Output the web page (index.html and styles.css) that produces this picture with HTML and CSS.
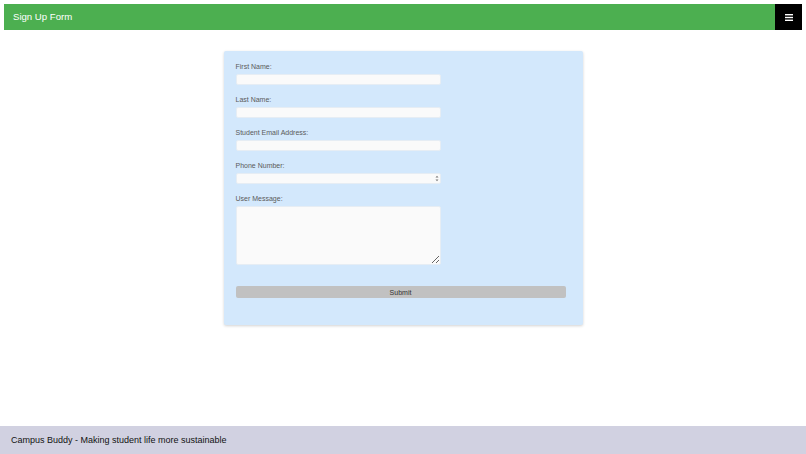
FILE: index.html
```html
<!DOCTYPE html>
<html lang="en">
<head>
<meta charset="utf-8">
<title>Sign Up Form</title>
<link rel="stylesheet" href="styles.css">
</head>
<body>
<div class="page">
  <header class="topbar">
    <span class="title">Sign Up Form</span>
    <button class="menu" aria-label="Menu">
      <svg width="8" height="7" viewBox="0 0 8 7"><rect x="0" y="0" width="8" height="1.4" fill="#fff"/><rect x="0" y="2.8" width="8" height="1.4" fill="#fff"/><rect x="0" y="5.6" width="8" height="1.4" fill="#fff"/></svg>
    </button>
  </header>
  <main class="main">
    <form class="card">
      <div class="group">
        <label class="lbl">First Name:</label>
        <input class="field" type="text">
      </div>
      <div class="group">
        <label class="lbl">Last Name:</label>
        <input class="field" type="text">
      </div>
      <div class="group">
        <label class="lbl">Student Email Address:</label>
        <input class="field" type="email">
      </div>
      <div class="group">
        <label class="lbl">Phone Number:</label>
        <div class="numwrap">
          <input class="field" type="text">
          <svg class="spin" width="4" height="7" viewBox="0 0 4 7"><path d="M0.5 2.6 L2 0.8 L3.5 2.6 Z" fill="#777"/><path d="M0.5 4.4 L2 6.2 L3.5 4.4 Z" fill="#777"/></svg>
        </div>
      </div>
      <div class="group">
        <label class="lbl">User Message:</label>
        <textarea class="area"></textarea>
      </div>
      <button class="submit" type="button">Submit</button>
    </form>
  </main>
  <footer class="footer">Campus Buddy - Making student life more sustainable</footer>
</div>
</body>
</html>
```
FILE: styles.css
```css
html, body {
  margin: 0;
  padding: 0;
}
body {
  font-family: "Liberation Sans", Arial, sans-serif;
  background: #ffffff;
}
.page {
  display: flex;
  flex-direction: column;
  min-height: 454px;
}
.topbar {
  margin: 4px 4px 0 4px;
  height: 26px;
  background: #4caf50;
  display: flex;
  align-items: center;
  justify-content: space-between;
}
.title {
  color: #ffffff;
  font-size: 9.6px;
  padding-left: 9px;
  padding-bottom: 2px;
}
.menu {
  width: 27px;
  height: 26px;
  background: #000;
  border: none;
  padding: 0;
  margin: 0;
  display: flex;
  align-items: center;
  justify-content: center;
}
.main {
  display: flex;
  justify-content: center;
  padding-top: 21px;
}
.card {
  width: 359px;
  box-sizing: border-box;
  background: #d3e8fc;
  box-shadow: 0 1px 3px rgba(0,0,0,0.18);
  border-radius: 2px;
  padding: 11px 17px 27px 12px;
  display: flex;
  flex-direction: column;
}
.group {
  display: flex;
  flex-direction: column;
  margin-bottom: 10px;
}
.lbl {
  font-size: 7px;
  line-height: 9px;
  color: #5a5a5a;
  margin-bottom: 3px;
}
.field {
  display: block;
  width: 205px;
  height: 11px;
  box-sizing: border-box;
  background: #fafafa;
  border: 1px solid #e6edf4;
  border-radius: 2px;
  padding: 0;
  margin: 0;
  outline: none;
}
.numwrap {
  position: relative;
  display: flex;
  width: 205px;
}
.spin {
  position: absolute;
  right: 2px;
  top: 2px;
}
.area {
  display: block;
  width: 205px;
  height: 59px;
  box-sizing: border-box;
  background: #fafafa;
  border: 1px solid #e6edf4;
  border-radius: 2px;
  padding: 0;
  margin: 0;
  resize: both;
}
.submit {
  margin-top: 11px;
  width: 330px;
  height: 12px;
  background: #c1c1c1;
  border: none;
  border-radius: 2px;
  font-family: "Liberation Sans", Arial, sans-serif;
  font-size: 7px;
  color: #333;
  padding: 0;
}
.footer {
  margin-top: auto;
  height: 28px;
  background: #d1d1e1;
  color: #111;
  font-size: 9px;
  display: flex;
  align-items: center;
  padding-left: 11px;
}
```
